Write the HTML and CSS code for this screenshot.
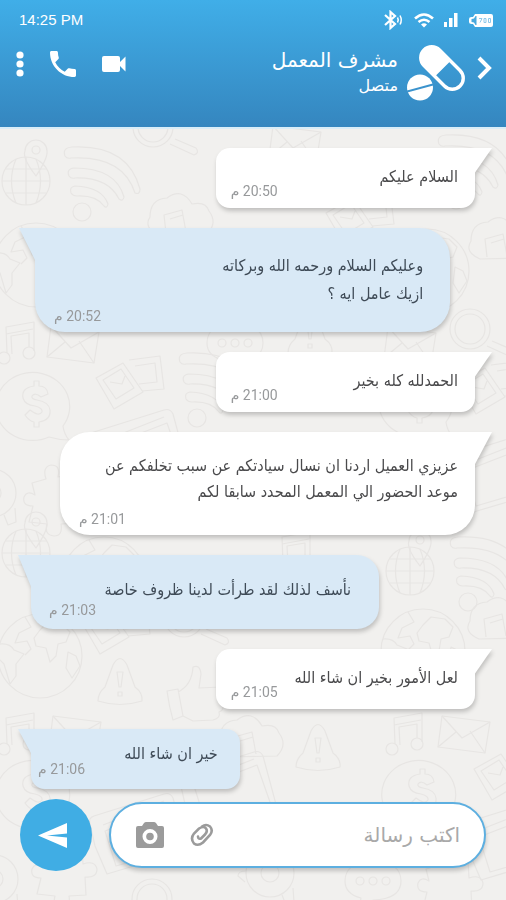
FILE: index.html
```html
<!DOCTYPE html>
<html lang="ar" dir="rtl">
<head>
	<meta charset="utf-8">
	<meta name="viewport" content="width=device-width, initial-scale=1">
	<title>مشرف المعمل</title>
	<link rel="stylesheet" href="styles.css">
</head>
<body>
<header class="header">
	<div class="status-bar">
		<span class="clock">14:25 PM</span>
		<div class="status-icons">
			<svg width="20" height="20" viewBox="0 0 20 20" fill="none" stroke="#fff" stroke-width="2.200">
				<path d="M1 5l10 9-4.500 4V2l4.500 4-10 9"/>
				<path d="M13.500 7.500q1.500 2.500 0 5M16 5.500q2.500 4.500 0 9" stroke-width="1.500"/>
			</svg>
			<svg width="20" height="15" viewBox="0 0 20 15" fill="none" stroke="#fff" stroke-width="2.600">
				<path d="M1 5.500q9-8 18 0M4.500 9q5.500-4.500 11 0"/>
				<path d="M10 14.500l-3-3q3-2.500 6 0z" fill="#fff" stroke="none"/>
			</svg>
			<svg width="14" height="14" viewBox="0 0 14 14" fill="#fff">
				<path d="M0 9h3v5H0zM5 5h3.500v9H5zM10 0h3.500v14H10z"/>
			</svg>
			<svg width="26" height="15" viewBox="0 0 26 15">
				<path d="M7 1h16q2 0 2 2v9q0 2-2 2H7L5 11H3.500Q1 11 1 9V6q0-2 2.500-2H5z" fill="#fff"/>
				<path d="M8.500 3v9H7.500L6 9.500 3.500 9V6L6 5.500 7.500 3z" fill="#49a9dd"/>
				<path d="M11 5.500h3l-2 4M16 5.500h2v4h-2zM20.500 5.500h2v4h-2z" fill="none" stroke="#8fc9ea"/>
			</svg>
		</div>
	</div>
	<div class="toolbar">
		<button class="icon-btn" type="button" aria-label="رجوع">
			<svg width="15" height="24" viewBox="0 0 15 24" fill="none" stroke="#fff" stroke-width="4"><path d="M2 2l10 10L2 22"/></svg>
		</button>
		<svg class="avatar" width="58" height="58" viewBox="0 0 58 58">
			<g transform="translate(35 24) rotate(45)">
				<rect x="-25.500" y="-11" width="51" height="22" rx="11" fill="none" stroke="#fff" stroke-width="3.400"/>
				<path d="M1-11h-15.500a11 11 0 0 0 0 22H1z" fill="#fff"/>
			</g>
			<circle cx="13" cy="43.500" r="13" fill="#fff"/>
			<path d="M0 47.500l26-7" stroke="#3b93cd" stroke-width="2"/>
		</svg>
		<div class="contact">
			<h1 class="contact-name">مشرف المعمل</h1>
			<p class="contact-status">متصل</p>
		</div>
		<div class="actions">
			<button class="icon-btn" type="button" aria-label="مكالمة فيديو">
				<svg width="24" height="16" viewBox="0 0 24 16" fill="#fff"><path d="M2 0h14q2 0 2 2v4l5.500-5.500v15L18 10v4q0 2-2 2H2q-2 0-2-2V2Q0 0 2 0z"/></svg>
			</button>
			<button class="icon-btn" type="button" aria-label="اتصال">
				<svg width="26" height="26" viewBox="3 3 18 18" fill="#fff"><path d="M6.620 10.790c1.440 2.830 3.760 5.140 6.590 6.590l2.200-2.200c.270-.270.670-.360 1.020-.240 1.120.370 2.330.570 3.570.570.550 0 1 .450 1 1V20c0 .550-.450 1-1 1-9.390 0-17-7.610-17-17 0-.550.450-1 1-1h3.500c.550 0 1 .450 1 1 0 1.250.200 2.450.570 3.570.110.350.030.740-.250 1.020l-2.200 2.200z"/></svg>
			</button>
			<button class="icon-btn" type="button" aria-label="المزيد">
				<svg width="8" height="26" viewBox="0 0 8 26" fill="#fff"><circle cx="4" cy="4" r="3.600"/><circle cx="4" cy="13" r="3.600"/><circle cx="4" cy="22" r="3.600"/></svg>
			</button>
		</div>
	</div>
</header>

<main class="chat">
	<svg class="wallpaper" viewBox="0 0 506 772" preserveAspectRatio="xMidYMin slice" aria-hidden="true">
		<defs>
			<g id="globe">
				<circle r="24"/>
				<path d="M-24 0h48M0-24v48M-20-12h40M-20 12h40M-10-22q-9 22 0 44M10-22q9 22 0 44"/>
				<path d="M10-5q-14-18-11-25a11 11 0 0 1 22 0q1 7-11 25z"/>
				<circle cx="10" cy="-31" r="4"/>
			</g>
			<g id="wifi">
				<path d="M-35-25q-3-8 7-9 56-3 68 42 0 6-5 4-12-38-64-35-4 1-6-2z"/>
				<path d="M-31-5q-3-7 5-8 42 0 50 29-1 5-5 2-11-22-44-21-4 1-6-2z"/>
				<path d="M-29 12q-2-6 4-7 27 1 33 18-1 5-4 2-8-11-27-10-4 0-6-3z"/>
				<circle cx="-18" cy="31" r="9"/>
			</g>
			<g id="earth">
				<circle r="42"/>
				<path d="M-40-12q10-1 14 6l10 4-8 10 0 12-6 8-6-20-6-6M-15-39l6 10-12 6-4 10 12-2 4 8-6 6M0-26l8-8 14 2 8 8-4 10-8 2-2 12-6 6-4-14-10-2-2-8zM28-4l8 4 4 10-8 12-6-10z"/>
			</g>
			<g id="music">
				<circle cx="-12" cy="14" r="6"/><circle cx="13" cy="9" r="6"/>
				<path d="M-9 9l-1-26 28-5 0 29M-4 10l-1-18 18-3 0 14M-10-10l27-5"/>
			</g>
			<g id="mail">
				<path d="M-22-15l48 6-5 31-47-6z"/><path d="M-22-15l20 22L26-9M-26 16l18-15M21 22L6 0"/>
			</g>
			<g id="dollar">
				<path d="M12 32a37 34 0 1 1 14-11q1 8 6 14-10 0-20-3z"/>
				<path d="M11-11q-1-8-9-8v-5h-5v5q-13 2-11 12 2 7 12 8 8 2 7 6-3 5-12-2l-5 5q4 6 9 7v5h5v-5q12-2 11-12-1-8-13-10-6-1-5-4 3-4 9 1z"/>
			</g>
			<g id="cards">
				<path d="M-34-6l27-15 20 29-29 17z"/><path d="M-27-4l18-11 13 19-18 11zM-1-24l31-4 4 33-22 2M5-18l20-3 2 19-18 2M-20-2l12 2 3-8"/>
			</g>
			<g id="laptop">
				<path d="M-45 25l12 28 80-24-14-52q-3-6-9-4l-70 22q-6 2-4 8z"/><path d="M-35 10l62-24 14 40-65 19zM-37 4L24-20"/>
			</g>
			<g id="puzzle">
				<path d="M-20-20l14-4q-4-12 5-14 10 0 7 12l16-3 1 18q12-4 14 5 0 9-12 8l1 18-17 1q2 12-7 12-10-1-7-12l-18-2 4-16q-11 0-9-9 3-7 11-2z"/>
			</g>
			<g id="thumb">
				<path d="M-25-4l11-2 5 27-10 4q-4-14-6-29zM-14-3q14-7 15-25 7-3 8 7l-2 14 22-1q7 3 2 8 5 5-1 9 3 6-3 8 2 6-6 8l-20 1-10-5"/>
			</g>
			<g id="bell">
				<path d="M-22 20q0-8 7-14l8-22Q0-29 7-16l8 22q8 6 7 14-22 7-44 0z"/><path d="M-3-9h6L1 6h-2zM-2 11h4v4h-4z"/>
			</g>
			<g id="cloud">
				<path d="M-25 18q-16-7-9-18 0-18 17-19Q-2-30 8-13q14-3 17 7 9 12-2 23z"/><path d="M-18 16l-2-18 18-5 4 22M-14 2l13-4"/>
			</g>
			<g id="lens">
				<circle r="20"/><circle r="15"/><path d="M22 12l21 9q4 5-2 7l-24-11"/>
			</g>
			<g id="talk">
				<path d="M-28 0q0-19 28-20 28 1 28 20 0 18-28 19-5 8-14 9l2-11q-16-4-16-17z"/>
				<circle cx="-13" r="4"/><circle r="4"/><circle cx="13" r="4"/>
			</g>
			<g id="gear">
				<circle r="24"/><circle r="9"/><path d="M-24-2q-8 0-8 5l7 6M12 22l4 10 8-3-1-14"/>
			</g>
		</defs>
		<g class="doodles">
			<use href="#globe" x="26" y="52"/><use href="#wifi" x="100" y="52"/>
			<use href="#lens" x="153" y="-2"/><use href="#cloud" x="184" y="88"/>
			<use href="#mail" x="295" y="12"/><use href="#wifi" x="474" y="40"/>
			<use href="#cards" x="360" y="90"/><use href="#earth" x="427" y="142"/>
			<use href="#cloud" x="505" y="112"/><use href="#earth" x="36" y="136"/>
			<use href="#music" x="16" y="215"/><use href="#mail" x="73" y="212"/>
			<use href="#dollar" x="37" y="276"/><use href="#cards" x="130" y="255"/>
			<use href="#laptop" x="140" y="308"/><use href="#wifi" x="215" y="258"/>
			<use href="#talk" x="235" y="214"/><use href="#bell" x="310" y="204"/>
			<use href="#mail" x="410" y="213"/><use href="#lens" x="470" y="200"/>
			<use href="#cards" x="492" y="260"/><use href="#dollar" x="420" y="272"/>
			<use href="#puzzle" x="52" y="374"/><use href="#gear" x="-8" y="364"/>
			<use href="#laptop" x="500" y="332"/><use href="#earth" x="104" y="450"/>
			<use href="#globe" x="26" y="424"/><use href="#music" x="292" y="425"/>
			<use href="#globe" x="410" y="442"/><use href="#wifi" x="486" y="442"/>
			<use href="#earth" x="40" y="527"/><use href="#cards" x="116" y="500"/>
			<use href="#bell" x="120" y="552"/><use href="#thumb" x="192" y="566"/>
			<use href="#lens" x="184" y="488"/><use href="#earth" x="423" y="522"/>
			<use href="#cloud" x="504" y="492"/><use href="#music" x="16" y="606"/>
			<use href="#mail" x="75" y="602"/><use href="#cloud" x="254" y="610"/>
			<use href="#bell" x="318" y="618"/><use href="#music" x="404" y="606"/>
			<use href="#mail" x="464" y="602"/><use href="#dollar" x="37" y="664"/>
			<use href="#dollar" x="423" y="664"/><use href="#laptop" x="140" y="692"/>
			<use href="#laptop" x="230" y="650"/><use href="#cards" x="508" y="646"/>
			<use href="#puzzle" x="60" y="746"/><use href="#gear" x="-6" y="750"/>
			<use href="#lens" x="152" y="770"/><use href="#gear" x="270" y="744"/>
			<use href="#talk" x="373" y="752"/><use href="#puzzle" x="446" y="760"/>
			<use href="#laptop" x="514" y="698"/>
		</g>
	</svg>

	<div class="messages">
		<div class="bubble received">
			<p class="text">السلام عليكم</p>
			<time class="time">20:50 م</time>
		</div>
		<div class="bubble sent tall">
			<p class="text">وعليكم السلام ورحمه الله وبركاته<br>ازيك عامل ايه ؟</p>
			<time class="time">20:52 م</time>
		</div>
		<div class="bubble received">
			<p class="text">الحمدلله كله بخير</p>
			<time class="time">21:00 م</time>
		</div>
		<div class="bubble received tall">
			<p class="text">عزيزي العميل اردنا ان نسال سيادتكم عن سبب تخلفكم عن<br>موعد الحضور الي المعمل المحدد سابقا لكم</p>
			<time class="time">21:01 م</time>
		</div>
		<div class="bubble sent medium">
			<p class="text">نأسف لذلك لقد طرأت لدينا ظروف خاصة</p>
			<time class="time">21:03 م</time>
		</div>
		<div class="bubble received">
			<p class="text">لعل الأمور بخير ان شاء الله</p>
			<time class="time">21:05 م</time>
		</div>
		<div class="bubble sent small">
			<p class="text">خير ان شاء الله</p>
			<time class="time">21:06 م</time>
		</div>
	</div>

	<form class="composer">
		<div class="field">
			<input class="input" type="text" placeholder="اكتب رسالة" aria-label="اكتب رسالة">
			<button class="icon-btn" type="button" aria-label="إرفاق ملف">
				<svg width="24" height="24" viewBox="0 0 24 24" fill="none" stroke="#9b9b9b" stroke-width="2.600" stroke-linecap="round">
					<path d="M12 3.500q4-3 8 0 3.500 4 0 8.500l-7 7.500q-5 4-9 1-4-5 0-10l5-5q5-3 7 0 2 3-1 6l-4 4q-3 1-3-2"/>
				</svg>
			</button>
			<button class="icon-btn" type="button" aria-label="كاميرا">
				<svg width="28" height="26" viewBox="0 0 28 26" fill="#9b9b9b">
					<path fill-rule="evenodd" d="M10 0h8q1 0 2 1l2 3h4q2 0 2 2v18q0 2-2 2H2q-2 0-2-2V6q0-2 2-2h4l2-3q1-1 2-1zM14 7a7.500 7.500 0 1 0 0 15 7.500 7.500 0 0 0 0-15z"/>
					<circle cx="14" cy="14.500" r="3.800"/>
				</svg>
			</button>
		</div>
		<button class="send" type="submit" aria-label="إرسال">
			<svg width="29" height="25" viewBox="0 0 29 25" fill="#fff"><path d="M29 0v10.500L9 12.500l20 2V25L0 12.500z"/></svg>
		</button>
	</form>
</main>
</body>
</html>
```

FILE: styles.css
```css
* {
	box-sizing: border-box;
}

body {
	margin: 0;
	min-height: 100vh;
	display: flex;
	flex-direction: column;
	font-family: "DejaVu Sans", sans-serif;
	background: #f1f0ee;
}

h1, p {
	margin: 0;
	font-weight: normal;
}

svg {
	display: block;
}

.icon-btn {
	flex-shrink: 0;
	padding: 0;
	border: 0;
	background: none;
	cursor: pointer;
}

/* header */
.header {
	height: 129px;
	color: #fff;
	background: linear-gradient(#40aee8, #3586bf);
	border-bottom: 2px solid #d9edf8;
}

.status-bar {
	display: flex;
	flex-direction: row-reverse;
	justify-content: space-between;
	align-items: center;
	height: 40px;
	padding: 0 12px 0 19px;
}

.clock {
	direction: ltr;
	font: 15px/20px "Liberation Sans", Arial, sans-serif;
}

.status-icons {
	direction: ltr;
	display: flex;
	align-items: center;
	gap: 10px;
}

.toolbar {
	display: flex;
	align-items: flex-start;
	padding: 4px 14px 0 16px;
}

.toolbar > .icon-btn {
	margin-top: 12px;
}

.avatar {
	margin: 0 12px 0 9px;
}

.contact {
	flex: 1;
	padding-top: 2px;
}

.contact-name {
	font-size: 20px;
	line-height: 28px;
}

.contact-status {
	font-size: 16px;
	line-height: 24px;
}

.actions {
	display: flex;
	align-items: center;
	gap: 26px;
	padding-top: 7px;
}

/* chat */
.chat {
	flex: 1;
	position: relative;
	display: flex;
	flex-direction: column;
	overflow: hidden;
}

.wallpaper {
	position: absolute;
	top: 0;
	left: 0;
	width: 100%;
	height: 100%;
}

.doodles {
	fill: none;
	stroke: #e7e5e3;
	stroke-width: 1.2;
	stroke-linejoin: round;
}

.messages {
	position: relative;
	display: flex;
	flex-direction: column;
	gap: 20px;
	padding: 19px 31px 0;
}

.bubble {
	position: relative;
	display: flex;
	justify-content: space-between;
	align-items: flex-end;
	width: 58.4%;
	min-height: 60px;
	padding: 16px 17px 9px 15px;
	border-radius: 14px;
	filter: drop-shadow(1px 3px 2px rgba(0, 0, 0, 0.2));
}

.received {
	background: #fff;
	border-top-right-radius: 0;
}

.sent {
	align-self: flex-end;
	background: #d9e9f6;
	border-top-left-radius: 0;
}

/* corner pointing at the speaker */
.bubble::before {
	content: "";
	position: absolute;
	top: 0;
	width: 18px;
	height: 26px;
	background: inherit;
}

.received::before {
	left: 100%;
	margin-left: -1px;
	clip-path: polygon(0 0, 100% 0, 0 100%);
}

.sent::before {
	right: 100%;
	margin-right: -1px;
	width: 14px;
	clip-path: polygon(0 0, 100% 0, 100% 100%);
}

.tall {
	flex-direction: column;
	align-items: stretch;
	width: 93.5%;
	min-height: 103px;
	padding: 21px 17px 8px 19px;
	border-radius: 30px;
}

.tall.received {
	border-top-right-radius: 0;
}

.tall.sent {
	margin-left: 4px;
	padding-top: 24px;
	padding-right: 27px;
	border-top-left-radius: 0;
}

.tall::before {
	height: 34px;
}

.tall.sent::before {
	width: 17px;
}

.medium {
	width: 78.4%;
	min-height: 74px;
	padding: 22px 28px 11px 18px;
	border-radius: 0 22px 22px 22px;
}

.medium::before {
	height: 34px;
}

.small {
	width: 47%;
	padding: 12px 22px 12px 7px;
}

.text {
	align-self: flex-start;
	font-family: "DejaVu Sans Condensed", "DejaVu Sans", sans-serif;
	font-size: 16px;
	line-height: 26px;
	color: #4a4a4c;
	white-space: nowrap;
}

.tall.sent .text {
	line-height: 28px;
}

.sent .text {
	color: #3f4b57;
}

.time {
	font-family: Roboto, "DejaVu Sans", sans-serif;
	font-size: 14px;
	line-height: 16px;
	color: #97999b;
	white-space: nowrap;
}

.tall .time {
	align-self: flex-end;
}

/* composer */
.composer {
	position: relative;
	display: flex;
	align-items: center;
	gap: 17px;
	margin-top: auto;
	padding: 8px 20px 29px;
}

.field {
	flex: 1;
	min-width: 0;
	display: flex;
	align-items: center;
	gap: 26px;
	height: 66px;
	padding: 0 24px 0 25px;
	background: #fff;
	border: 2px solid #5dafe0;
	border-radius: 33px;
	box-shadow: 0 3px 4px rgba(0, 0, 0, 0.2);
}

.input {
	flex: 1;
	min-width: 0;
	padding: 0;
	border: 0;
	outline: 0;
	background: none;
	font-family: inherit;
	font-size: 20px;
	line-height: 28px;
	color: #4a4a4c;
}

.input::placeholder {
	color: #a9a9a9;
	opacity: 1;
}

.send {
	flex-shrink: 0;
	display: flex;
	align-items: center;
	justify-content: center;
	width: 72px;
	height: 72px;
	padding: 0 8px 0 0;
	border: 0;
	border-radius: 50%;
	background: #40ade4;
	cursor: pointer;
}
```
